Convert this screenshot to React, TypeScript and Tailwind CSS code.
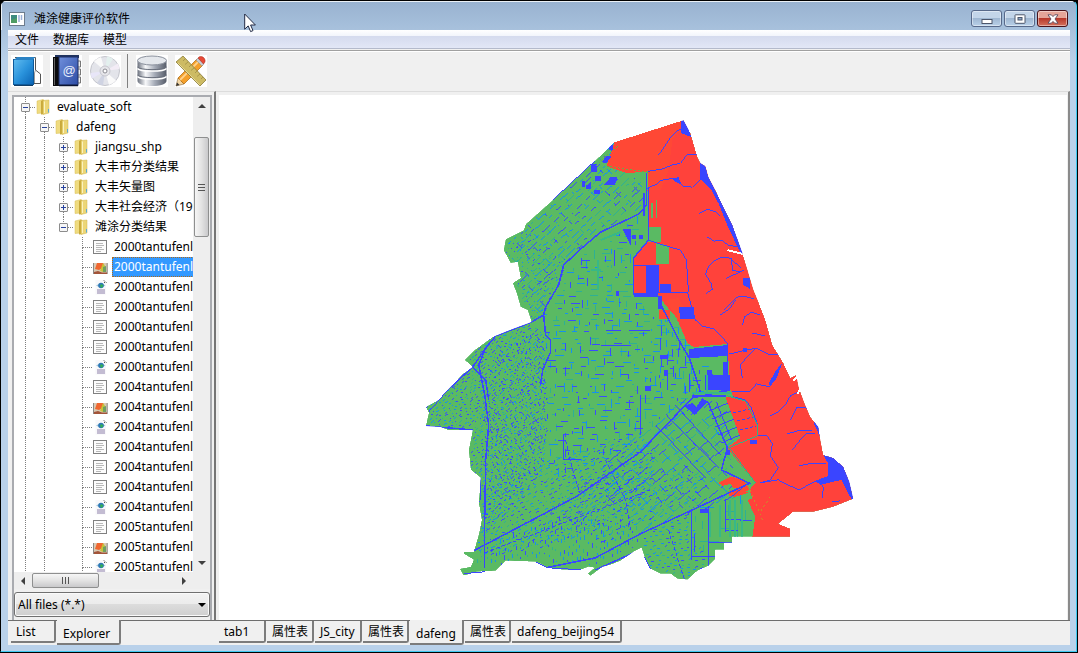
import React from "react";

type Pt = [number, number];

/* ---------- map data ---------- */

const OUTLINE =
  "683,120 690,133 697,157 700,163 705,166 708,177 716,192 723,207 732,225 742,253 753,290 758,302 765,320 772,345 783,363 790,378 796,375 798,386 800,392 804,403 810,417 818,427 820,440 823,455 833,458 843,467 849,482 853,499 833,507 813,512 793,512 778,524 790,529 790,537 732,537 732,543 724,543 724,550 715,550 715,559 708,566 697,571 687,580 677,579 670,574 660,574 650,569 644,557 641,548 633,552 620,561 610,565 602,567 590,576 587,574 594,568 588,567 580,570 562,570 547,568 540,564 535,562 505,561 495,571 476,572 463,576 459,569 470,567 473,560 463,554 463,552 473,552 478,535 481,520 478,503 480,478 470,470 468,450 472,430 447,430 440,427 425,426 428,413 425,407 438,400 447,390 462,374 472,367 464,360 474,350 492,337 512,329 531,322 527,310 520,307 516,293 512,283 520,278 517,262 510,263 503,250 505,239 523,230 525,224 552,200 580,174 594,161 614,142";

const RED =
  "614,142 683,120 690,133 697,157 705,166 716,192 732,225 742,253 758,302 765,320 772,345 783,363 790,378 796,375 800,392 810,417 818,427 823,455 833,458 843,467 849,482 853,499 833,507 813,512 793,512 778,524 790,529 790,537 752,537 755,517 747,500 752,499 749,490 755,483 727,448 740,438 725,397 733,397 730,390 727,344 693,347 687,343 678,322 667,308 658,295 633,295 632,260 640,248 648,240 655,241 661,227 648,227 647,190 648,171 627,173 606,166";

const pts = (s: string): Pt[] =>
  s.split(" ").map((p) => {
    const [x, y] = p.split(",").map(Number);
    return [x, y] as Pt;
  });

const inside = (x: number, y: number, poly: Pt[]) => {
  let hit = false;
  for (let i = 0, j = poly.length - 1; i < poly.length; j = i++) {
    const [xi, yi] = poly[i];
    const [xj, yj] = poly[j];
    if (yi > y !== yj > y && x < ((xj - xi) * (y - yi)) / (yj - yi) + xi) hit = !hit;
  }
  return hit;
};

type Zone = {
  poly: string;
  angle: number;
  step: number;
  dash: [number, number];
  gap: [number, number];
  mix: [number, number];
};

const ZONES: Zone[] = [
  { poly: "614,142 640,175 646,205 600,232 560,268 543,315 531,322 512,283 520,278 503,250 505,239 552,200", angle: -42, step: 6, dash: [2, 12], gap: [1, 7], mix: [0.35, 0.8] },
  { poly: "614,142 640,175 646,205 600,232 560,268 543,315 531,322 512,283 520,278 503,250 505,239 552,200", angle: 45, step: 11, dash: [1, 7], gap: [3, 14], mix: [0.35, 0.8] },
  { poly: "531,322 512,283 503,245 530,232 568,262 546,315", angle: -26, step: 4, dash: [1, 2], gap: [3, 7], mix: [0.3, 0.75] },
  { poly: "646,205 640,240 632,295 667,310 700,350 727,390 690,400 640,440 590,470 548,480 545,330 565,268", angle: 0, step: 6, dash: [2, 9], gap: [5, 18], mix: [0.35, 0.82] },
  { poly: "646,205 640,240 632,295 667,310 700,350 727,390 690,400 640,440 590,470 548,480 545,330 565,268", angle: 90, step: 8, dash: [2, 9], gap: [6, 22], mix: [0.45, 0.85] },
  { poly: "531,322 546,330 548,420 544,470 520,500 480,540 478,503 480,478 470,470 468,450 472,430 425,426 425,407 472,367 464,360 492,337", angle: -32, step: 3, dash: [1, 3], gap: [2, 5], mix: [0.5, 0.88] },
  { poly: "546,330 548,420 542,470 500,500 485,490 478,440 484,390 495,345", angle: 58, step: 4, dash: [1, 4], gap: [2, 9], mix: [0.7, 0.92] },
  { poly: "480,500 545,462 640,430 655,450 650,500 560,545 475,560", angle: -24, step: 4, dash: [1, 4], gap: [2, 6], mix: [0.4, 0.85] },
  { poly: "475,545 560,515 635,520 640,548 590,568 535,562 475,572", angle: 90, step: 4, dash: [1, 5], gap: [3, 10], mix: [0.4, 0.85] },
  { poly: "690,396 725,400 740,440 727,450 752,497 640,535 600,500 600,460", angle: -40, step: 9, dash: [5, 16], gap: [1, 5], mix: [0.5, 0.82] },
  { poly: "690,396 725,440 727,450 745,490 660,520 600,500 600,470 640,440", angle: 46, step: 11, dash: [3, 12], gap: [2, 8], mix: [0.45, 0.82] },
  { poly: "590,470 700,470 700,505 600,545 560,520", angle: -28, step: 5, dash: [1, 4], gap: [2, 6], mix: [0.35, 0.8] },
  { poly: "640,537 690,510 708,566 687,580 650,569", angle: -10, step: 4, dash: [2, 3], gap: [3, 6], mix: [0.3, 0.9] },
  { poly: "655,310 668,310 690,345 700,395 655,390", angle: 90, step: 6, dash: [3, 12], gap: [4, 12], mix: [0.5, 0.8] },
  { poly: "692,508 745,490 752,537 715,550 692,560", angle: 0, step: 11, dash: [5, 20], gap: [8, 22], mix: [0.3, 0.5] },
  { poly: "692,508 745,490 752,537 715,550 692,560", angle: 90, step: 9, dash: [5, 20], gap: [5, 22], mix: [0.15, 0.35] },
];

const buildTexture = () => {
  let seed = 20547;
  const rnd = () => {
    seed = (seed * 1664525 + 1013904223) % 4294967296;
    return seed / 4294967296;
  };
  const land = pts(OUTLINE);
  const red = pts(RED);
  const out = { blue: "", sky: "", teal: "" };
  for (const z of ZONES) {
    const poly = pts(z.poly);
    const a = (z.angle * Math.PI) / 180;
    const c = Math.cos(a);
    const s = Math.sin(a);
    const cx = 600;
    const cy = 380;
    for (let v = -300; v < 300; v += z.step) {
      let u = -300 + rnd() * 10;
      while (u < 300) {
        const len = z.dash[0] + rnd() * (z.dash[1] - z.dash[0]);
        const w = v + Math.round((rnd() - 0.5) * z.step * 0.5);
        const x = cx + u * c - w * s;
        const y = cy + u * s + w * c;
        const x2 = x + len * c;
        const y2 = y + len * s;
        if (inside(x, y, poly) && inside(x2, y2, poly) && inside(x, y, land) && !inside(x, y, red)) {
          const seg = `M${x.toFixed(1)} ${y.toFixed(1)}L${x2.toFixed(1)} ${y2.toFixed(1)}`;
          const r = rnd();
          if (r < z.mix[0]) out.blue += seg;
          else if (r < z.mix[1]) out.sky += seg;
          else out.teal += seg;
        }
        u += len + z.gap[0] + rnd() * (z.gap[1] - z.gap[0]);
      }
    }
  }
  return out;
};

const TEXTURE = buildTexture();

const MapView = () => (
  <svg viewBox="218 95 849 525" className="block h-full w-full" shapeRendering="crispEdges" role="img" aria-label="dafeng">
    <defs>
      <clipPath id="land">
        <polygon points={OUTLINE} />
      </clipPath>
    </defs>
    <g clipPath="url(#land)" fill="none">
      <polygon points={OUTLINE} fill="#5aba63" />
      <path d={TEXTURE.teal} stroke="#2fb094" />
      <path d={TEXTURE.sky} stroke="#1690ee" />
      <path d={TEXTURE.blue} stroke="#3b4bff" />
      <polygon points={RED} fill="#ff423b" />
      <polygon points="614,142 683,120 672,140 668,170 660,190 648,190 648,171 627,173 606,166" fill="#ff4835" />
      <polygon points="718,483 730,477 743,479 749,490 745,492 738,488 733,488 730,484 722,486" fill="#ff4835" />
      <polygon points="729,491 740,488 748,493 735,497 729,496" fill="#ff4835" />
      {/* polders within the tidal flat */}
      <path d="M655 242L669 246V264H656ZM661 227V242H648V227ZM651 203H653V218H651ZM656 200H657V218H656Z" fill="#5aba63" />
      <path d="M633 297H658L678 320H660V298Z" fill="#5aba63" />
      <path d="M659 310H670V319H659ZM665 300L678 298L690 320H677Z" fill="#ff4835" />
      {/* sea and ponds */}
      <g fill="#3a45ff">
        <path d="M681 120H685L691 137L681 133ZM700 160L705 166L708 177L723 207L732 225L744 256L739 251L726 223L718 203L711 190L700 179Z" />
        <path d="M647 265H658V293H647ZM660 284H671V293H660ZM633 293H658V297H633ZM658 296H662V309H658ZM678 307H694V319H680Z" />
        <path d="M622 229H630V245ZM631 235H635V239H631ZM638 235H642V239H638ZM642 193H645V216H642ZM615 291H618V296H615Z" />
        <path d="M689 349L727 345V356L689 358ZM705 375H723V362H727V375H730V390H705ZM707 370H712V376H707Z" />
        <path d="M684 406L692 403L696 407L702 398L707 402L694 415Z" />
        <path d="M823 455L833 458L843 467L849 480L855 499L851 499L841 480L820 485L815 481L828 476V464Z" />
        <path d="M816 422H819V434H821V440L813 422ZM743 278H750V289L743 285ZM782 363L776 379L770 386L768 384L776 370Z" />
        <path d="M590 164H596V172H590ZM604 156H611L606 163H602ZM608 145H612V150H608ZM603 185L610 177H617L614 185ZM594 176H600V181H594ZM585 186L590 182V189H585ZM593 190H599V194H593ZM581 181H584V187H581ZM672 178L678 177L681 184L674 181Z" />
        <path d="M700 509H708V513H700ZM660 355H668V359H660ZM664 370H668V376H664ZM645 386H651V391H645ZM743 348H747V352H743ZM750 440H757V444H750ZM726 450H730V455H726Z" />
      </g>
      {/* creeks on the flat */}
      <g stroke="#3a45ff">
        <path d="M658 155L665 145L670 137L676 131L683 128L688 134M648 171L661 169L671 165L680 163L687 154H697M647 188L656 184L661 180L673 178L683 186L692 187L701 178V172M699 213L707 209L716 212L720 216M707 237L714 241L721 240L728 245L738 247M705 274L708 267L713 261L721 257H728L734 262L741 268M712 290L711 284L705 274M726 278L735 274L744 270M731 258L732 270L740 272M706 293L712 289M724 310L730 304L737 297L744 296L754 299M648 240L660 244L680 250L686 260L688 292H658M633 265H646V293M658 265V293" />
        <path d="M687 292L695 320L702 326L714 329L722 337L727 344V390M742 325L744 317L751 312L760 315M720 315L730 308L735 300M752 333L765 336M729 354L742 351L756 348L768 354H778M756 348L745 359L740 365L742 378M732 392L750 391L756 384L770 387M770 416L778 412L785 405L790 396L798 392M790 420L796 408L806 408L812 413M787 434L797 431H812M792 450L801 439L806 434H815M799 466L808 464H826M733 397L745 400L751 408L757 424V435L767 436L772 444L770 456L778 468L770 480L760 483L778 480L785 484L799 490L812 483L818 480M819 480L823 488L822 498M832 502L840 501M748 483L731 497L724 501" />
      </g>
      <path d="M733 413L749 409M737 421L753 417M740 430L756 426" stroke="#3a45ff" strokeDasharray="3 2" />
      <path d="M729 448L755 483M727 396L745 401L757 425V436L728 448" stroke="#34b184" />
      <path d="M748 486L762 520M770 497L760 512" stroke="#c98b29" strokeDasharray="2 3" />
      {/* rivers and trunk canals */}
      <g stroke="#3a45ff" strokeWidth="1.5">
        <path d="M646 173V205L638 214L600 232L580 249L563 265L558 285L545 307L543 315L531 322M648 188V240L633 258V295" />
        <path d="M543 315L545 335L550 340V352L542 370L540 385M531 322L495 336L485 348L472 367L485 380L488 400M485 348L478 365L484 395L488 425L485 460L484 520V568M447 390L472 367M425 426L472 430M480 478V500" />
        <path d="M473 551L530 521L577 496L640 452L692 398L730 390M640 550L595 570M545 568L595 558L640 534L690 511L750 483" />
        <path d="M658 300L680 343L689 358L700 392M707 401L727 448L721 470L750 484M692 396H726" />
      </g>
      <g stroke="#3a45ff" strokeDasharray="4 2">
        <path d="M484 553L650 490M565 440L572 470L580 495M605 460L625 500L630 530M668 530L684 580" />
      </g>
      <g stroke="#3a45ff">
        <path d="M691 510V560M708 506V566M725 499V532M708 543H732M725 531H738M691 557H715M740 521H752M700 512L708 507M690 358L727 352M689 374V392M614 250V266M605 330H620M628 330H650M600 345H630M640 395V435M563 435V460H580" />
        <path d="M716 402L731 440M709 411L728 403M712 419L731 411M715 427L734 419M718 435L737 427M721 443L740 435M675 405L720 455M665 414L715 465M655 425L705 478" />
      </g>
      <path d="M692 393H732M707 375V392M710 512V537M720 505V537M730 500V537M735 500V537M742 500V537M600 240L620 232M590 270H600M597 260V290" stroke="#38b887" strokeWidth="2" />
      <path d="M595 166L607 154L618 146M606 166L648 172" stroke="#6fa847" strokeDasharray="2 2" />
      <path d="M727 250L743 254" stroke="#fff" strokeWidth="2" />
    </g>
    <path d="M793 381L797 376M797 394L801 388" stroke="#ffffff" strokeWidth="2" />
    <path d="M552 200L594 161M428 412L447 390M535 562L547 568L580 570M463 574L484 572M644 557L650 569" stroke="#3a45ff" fill="none" />
  </svg>
);

/* ---------- tool bar drawings ---------- */

const NotebookIcon = () => (
  <svg viewBox="0 0 32 32" className="size-8">
    <defs>
      <linearGradient id="nb" x1="0" y1="0" x2="1" y2="1">
        <stop offset="0" stopColor="#62bdf0" />
        <stop offset=".5" stopColor="#2a93dc" />
        <stop offset="1" stopColor="#0a63b4" />
      </linearGradient>
    </defs>
    <path d="M4 2.500H24.500V15L29.500 19V28.500H18" fill="#fff" stroke="#555" strokeWidth="1" />
    <path d="M24.500 15L23.500 18V28" fill="none" stroke="#999" />
    <rect x="2.500" y="4.500" width="20" height="25" fill="url(#nb)" stroke="#0d5a9c" />
    <path d="M3 5L6 2H24L22 5Z" fill="#2c83c4" />
    <path d="M3 30.500H22" stroke="#123f68" />
  </svg>
);

const AddressBookIcon = () => (
  <svg viewBox="0 0 32 32" className="size-8">
    <defs>
      <linearGradient id="ab" x1="0" y1="0" x2="1" y2="1">
        <stop offset="0" stopColor="#7090dc" />
        <stop offset="1" stopColor="#2c4ba4" />
      </linearGradient>
    </defs>
    <path d="M27 6H30.500V12H28M27 14H30.500V20H28M27 22H30.500V28H27" fill="#eee" stroke="#777" />
    <rect x="5" y="0" width="24" height="3" fill="#20335e" />
    <rect x="3" y="2" width="8" height="29" fill="#0b0b0d" />
    <path d="M4.500 3V30" stroke="#666" />
    <rect x="9" y="2" width="19" height="28" fill="url(#ab)" stroke="#1c2e66" />
    <path d="M9 30.500H28" stroke="#0b1430" strokeWidth="1.500" />
    <text x="19" y="20" textAnchor="middle" fontSize="13" fill="#e8effc" fontFamily="Liberation Sans, sans-serif">@</text>
  </svg>
);

const DiscIcon = () => (
  <svg viewBox="0 0 32 32" className="size-8">
    <circle cx="16" cy="16" r="14.500" fill="#e3e4ea" stroke="#c4c5cc" />
    <path d="M16 16L5 6.500A14.500 14.500 0 0 1 12 2Z" fill="#fafafa" />
    <path d="M16 16L27 25.500A14.500 14.500 0 0 1 20 30Z" fill="#fafafa" />
    <path d="M16 16L29 8.500A14.500 14.500 0 0 1 30.300 14Z" fill="#f3ecf6" />
    <path d="M16 16L3 23.500A14.500 14.500 0 0 1 1.700 18Z" fill="#e8e6f8" />
    <path d="M16 16L18 1.600A14.500 14.500 0 0 1 24 4Z" fill="#e3f0ee" />
    <path d="M16 16L8 28A14.500 14.500 0 0 0 14 30.300Z" fill="#cfd3e2" />
    <circle cx="16" cy="16" r="5" fill="#e6e6ea" stroke="#c6c6ce" />
    <circle cx="16" cy="16" r="2" fill="#fff" stroke="#8b8b93" />
  </svg>
);

const DatabaseIcon = () => (
  <svg viewBox="0 0 32 32" className="size-8">
    <defs>
      <linearGradient id="db" x1="0" x2="1">
        <stop offset="0" stopColor="#6b717e" />
        <stop offset=".28" stopColor="#f7f8fa" />
        <stop offset=".6" stopColor="#a4aab6" />
        <stop offset="1" stopColor="#565c69" />
      </linearGradient>
    </defs>
    <path d="M1.500 6V26C1.500 29 8 31 16 31S30.500 29 30.500 26V6Z" fill="url(#db)" />
    <path d="M1.500 12C4 15.500 28 15.500 30.500 12M1.500 20C4 23.500 28 23.500 30.500 20" fill="none" stroke="#6a707d" strokeWidth="1" />
    <path d="M1.500 13.500C4 17 28 17 30.500 13.500M1.500 21.500C4 25 28 25 30.500 21.500" fill="none" stroke="#fff" strokeWidth="1.300" />
    <ellipse cx="16" cy="5.500" rx="14.500" ry="4.500" fill="#e4e7ec" stroke="#8a909c" />
  </svg>
);

const RulerPencilIcon = () => (
  <svg viewBox="0 0 32 32" className="size-8">
    <path d="M1 31L3 23L9 29Z" fill="#f3d6a4" stroke="#8a6a3a" strokeWidth=".6" />
    <path d="M1 31L2 27.500L4.500 30Z" fill="#333" />
    <path d="M3 23L22 4L28 10L9 29Z" fill="#f4a02c" stroke="#a9660f" strokeWidth=".7" />
    <path d="M5 25L24 6" stroke="#ffd28a" strokeWidth="1.800" />
    <path d="M21 5L23 3L29 9L27 11Z" fill="#c9ccd2" stroke="#888" strokeWidth=".5" />
    <path d="M23 3C25 0 31 2 30 7L28.500 9Z" fill="#e84a37" stroke="#a32c1d" strokeWidth=".5" />
    <path d="M1 7L8 1L31 25L25 31Z" fill="#cdbb64" stroke="#8c7c38" strokeWidth=".8" />
    <path d="M10 4L8 6M13 7L10 9.500M16 10L14 12M19 13L16 15.500M22 16L20 18M25 19L22 21.500M28 22L26 24" stroke="#9a8a44" strokeWidth=".7" />
    <path d="M3 8L25 30" stroke="#e6d994" strokeWidth="1" />
  </svg>
);

/* ---------- tree ---------- */

type IconKind = "folder" | "text" | "image" | "globe";

const NodeIcon = ({ kind }: { kind: IconKind }) => {
  if (kind === "folder")
    return (
      <svg viewBox="0 0 16 16" className="size-4 shrink-0">
        <path d="M2 2L8 .5V14L2 14.500Z" fill="#efdb80" stroke="#d9bf55" strokeWidth=".5" />
        <path d="M6 2L9 .5L10 15L6 15.500Z" fill="#c9a93a" />
        <path d="M8 1.500L14 1V14L8 15.500Z" fill="#ecd677" stroke="#d2b64e" strokeWidth=".5" />
        <path d="M9.500 2.500V14" stroke="#fbf3bf" />
        <path d="M13.500 10V13.500" stroke="#59a9d8" />
      </svg>
    );
  if (kind === "text")
    return (
      <svg viewBox="0 0 16 16" className="size-4 shrink-0" shapeRendering="crispEdges">
        <rect x="1.500" y="1.500" width="13" height="13" rx="1" fill="#fcfcfc" stroke="#808080" />
        <path d="M4 4.500H11M4 6.500H12M4 8.500H10M4 10.500H12M4 12.500H9" stroke="#b9b9b9" />
      </svg>
    );
  if (kind === "image")
    return (
      <svg viewBox="0 0 16 16" className="size-4 shrink-0">
        <rect x="1" y="4" width="14.500" height="11" fill="#d7c9b4" />
        <path d="M1.500 4V15M15.200 4V15" stroke="#777" strokeWidth=".8" />
        <path d="M3 10L5 4H11L12 8L7 11Z" fill="#f0662f" />
        <path d="M8 12L11 4L13 7L11 13Z" fill="#c6c23a" />
        <path d="M11 8L14 7V13H11Z" fill="#6fa060" />
        <path d="M2 13L6 12L10 13.500H15V15H2Z" fill="#a3553a" />
      </svg>
    );
  return (
    <svg viewBox="0 0 16 16" className="size-4 shrink-0">
      <path d="M3.500 1H11L14 4V15.500H3.500Z" fill="#f8f8fa" />
      <path d="M11.500 1L14.500 4M12 3.500H14.500" stroke="#555" strokeDasharray="1 1" fill="none" />
      <rect x="5" y="10" width="8" height="5" fill="#c3bcd2" />
      <path d="M4 6.500Q9 3 13.500 6.500Q9 9.500 4 6.500" fill="#9cc4dc" />
      <circle cx="9" cy="6.500" r="2.800" fill="#2c78b4" />
      <path d="M9 5L11.500 6.500L9.500 9L8 7Z" fill="#35b052" />
    </svg>
  );
};

type Node = { label: string; level: number; kind: IconKind; open?: boolean; selected?: boolean; guides: boolean[] };

const folder = (label: string, level: number, open: boolean, guides: boolean[]): Node => ({ label, level, kind: "folder", open, guides });
const file = (year: number, kind: IconKind, selected = false): Node => ({
  label: `${year}tantufenlei`,
  level: 3,
  kind,
  selected,
  guides: [true, true, false],
});

const NODES: Node[] = [
  folder("evaluate_soft", 0, true, []),
  folder("dafeng", 1, true, [true]),
  folder("jiangsu_shp", 2, false, [true, true]),
  folder("大丰市分类结果", 2, false, [true, true]),
  folder("大丰矢量图", 2, false, [true, true]),
  folder("大丰社会经济（1995", 2, false, [true, true]),
  folder("滩涂分类结果", 2, true, [true, true]),
  file(2000, "text"),
  file(2000, "image", true),
  file(2000, "globe"),
  file(2000, "text"),
  file(2000, "text"),
  file(2000, "text"),
  file(2000, "globe"),
  file(2004, "text"),
  file(2004, "image"),
  file(2004, "globe"),
  file(2004, "text"),
  file(2004, "text"),
  file(2004, "text"),
  file(2004, "globe"),
  file(2005, "text"),
  file(2005, "image"),
  file(2005, "globe"),
];

const TreeRow = ({ node, last }: { node: Node; last: boolean }) => (
  <li role="treeitem" aria-selected={!!node.selected} className="flex h-5 items-center whitespace-nowrap">
    {node.guides.map((on, i) => (
      <span key={i} className="flex h-5 w-[19px] shrink-0 pl-[9px]">
        {on && <span className="h-5 border-l border-dotted border-[#808080]" />}
      </span>
    ))}
    <span className="relative flex h-5 w-[19px] shrink-0 flex-col pl-[9px]">
      <span className="h-[11px] border-b border-l border-dotted border-[#808080]" />
      <span className={last ? "h-[9px]" : "h-[9px] border-l border-dotted border-[#808080]"} />
      {node.kind === "folder" && (
        <button
          type="button"
          aria-label={node.open ? "折叠" : "展开"}
          className="absolute top-1.5 left-[5px] flex size-[9px] items-center justify-center rounded-[1px] border border-[#8c8c8c] bg-[#f6f6f6]"
        >
          <svg viewBox="0 0 5 5" className="size-[5px]" shapeRendering="crispEdges">
            <path d={node.open ? "M0 2.500H5" : "M0 2.500H5M2.500 0V5"} stroke="#27429c" />
          </svg>
        </button>
      )}
    </span>
    <NodeIcon kind={node.kind} />
    <span
      className={
        node.selected
          ? "ml-1 flex h-5 items-center border border-dotted border-[#b06a1c] bg-[#3399ff] pr-1 pl-px text-white"
          : "ml-1.5"
      }
    >
      {node.label}
    </span>
  </li>
);

const Arrow = ({ d }: { d: string }) => (
  <svg viewBox="0 0 8 8" className="size-2">
    <path d={d} fill="#404040" />
  </svg>
);

const Tab = ({ label, active = false, width }: { label: string; active?: boolean; width: string }) => (
  <button
    type="button"
    role="tab"
    aria-selected={active}
    className={`${width} mr-px flex shrink-0 justify-start whitespace-nowrap rounded-br-[3px] border-r-2 border-b-2 border-[#7c7c7c] bg-[#f0f0f0] ${
      active ? "-mt-px h-[25px] items-center pt-1 pl-1.5" : "h-[22px] items-center pt-0.5 pl-[5px]"
    }`}
  >
    {label}
  </button>
);

const WinButton = ({ label, tone, children }: { label: string; tone: string; children: React.ReactNode }) => (
  <button
    type="button"
    aria-label={label}
    className={`flex h-[17px] w-[31px] items-center justify-center rounded-[3px] border shadow-[inset_0_0_0_1px_#ffffff70] ${tone}`}
  >
    {children}
  </button>
);

const PLAIN = "border-[#57698a] bg-[linear-gradient(#c3d5e9_0_50%,#9fb7d2_50%,#b9d0e8)]";
const CLOSE = "border-[#4a1219] bg-[linear-gradient(#e5a598_0_50%,#b8392a_50%,#d4705c)]";

export default function App() {
  return (
    <div className="h-screen bg-black pr-px pb-px font-['Noto_Sans','Noto_Sans_CJK_SC',sans-serif] text-xs leading-4 text-black">
      <div className="relative flex h-full flex-col overflow-hidden rounded-t-md border-t border-r border-b border-l border-t-black border-r-[#3fc8f0] border-b-[#3fc8f0] border-l-black bg-[linear-gradient(#98b2d0,#b9d1ea_60px)]">
        <header className="flex h-[29px] shrink-0 items-center border-t border-l border-white/80 pt-1.5 pl-[7px]">
          <svg viewBox="0 0 16 14" className="h-[14px] w-4 shrink-0">
            <rect x=".5" y=".5" width="15" height="13" fill="#fff" stroke="#6d7c8d" />
            <rect x="2" y="3" width="6" height="8" fill="#3e8b7f" />
            <path d="M2 8L8 6V11H2Z" fill="#4f9c63" />
            <path d="M10 3V10M12.500 3V8" stroke="#9bb0d8" strokeWidth="1.500" />
          </svg>
          <h1 className="ml-[9px] text-xs">滩涂健康评价软件</h1>
          <div className="mr-2 ml-auto flex gap-0.5 pb-px">
            <WinButton label="最小化" tone={PLAIN}>
              <svg viewBox="0 0 12 10" className="h-[10px] w-3">
                <rect x="1" y="5.500" width="10" height="4" fill="#fff" stroke="#4c566b" />
              </svg>
            </WinButton>
            <WinButton label="最大化" tone={PLAIN}>
              <svg viewBox="0 0 12 10" className="h-[10px] w-3">
                <rect x="1" y=".8" width="10" height="8.500" rx=".5" fill="#fff" stroke="#4c566b" />
                <rect x="4" y="3.500" width="4" height="2.500" fill="#8ba6c8" stroke="#4c566b" />
              </svg>
            </WinButton>
            <WinButton label="关闭" tone={CLOSE}>
              <svg viewBox="0 0 12 10" className="h-[10px] w-3">
                <path d="M1 .8H4.300L6 2.600L7.700 .8H11L8 5L11 9.200H7.700L6 7.400L4.300 9.200H1L4 5Z" fill="#fff" stroke="#5b4b5e" strokeWidth=".9" />
              </svg>
            </WinButton>
          </div>
        </header>

        <div className="mr-1.5 mb-1.5 ml-[7px] flex min-h-0 flex-1 flex-col bg-[#f0f0f0]">
          <nav className="flex h-[19px] shrink-0 items-center gap-[14px] border-b border-[#b4bacb] bg-[linear-gradient(#fff_0,#f1f4fb_35%,#d5dbee_36%,#e2e7f6)] pt-0.5 pl-[7px]">
            <button type="button">文件</button>
            <button type="button">数据库</button>
            <button type="button">模型</button>
          </nav>
          <div className="mt-px flex h-[41px] shrink-0 items-center border-t border-[#a0a0a0] pl-[3px] shadow-[inset_0_1px_0_#fff]">
            <button type="button" aria-label="新建" className="bg-white">
              <NotebookIcon />
            </button>
            <button type="button" aria-label="通讯录" className="ml-[7px] bg-white">
              <AddressBookIcon />
            </button>
            <button type="button" aria-label="光盘" className="ml-[7px] bg-white">
              <DiscIcon />
            </button>
            <span className="ml-1.5 h-[34px] w-px bg-[#808080]" />
            <button type="button" aria-label="数据库" className="ml-2 bg-white">
              <DatabaseIcon />
            </button>
            <button type="button" aria-label="工具" className="ml-[7px] bg-white">
              <RulerPencilIcon />
            </button>
          </div>

          <main className="flex min-h-0 flex-1">
            <aside className="flex w-[208px] shrink-0 flex-col">
              <div className="flex min-h-0 flex-1 flex-col border-t border-r-2 border-t-[#dcdcdc] border-r-[#757575] pt-[3px] pr-0.5 pl-1">
                <div className="flex min-h-0 flex-1 flex-col border-2 border-b-0 border-[#a9abb0]">
                  <div className="flex min-h-0 flex-1">
                    <ul role="tree" className="min-w-0 flex-1 overflow-hidden bg-white pl-0.5">
                      {NODES.map((n, i) => (
                        <TreeRow key={i} node={n} last={n.label === "滩涂分类结果"} />
                      ))}
                    </ul>
                    <div className="flex w-[17px] shrink-0 flex-col items-center bg-[#eeeeee]">
                      <button type="button" aria-label="向上" className="flex h-[18px] items-center">
                        <Arrow d="M0 6L4 2L8 6Z" />
                      </button>
                      <div className="mt-[22px] flex h-[100px] w-[15px] flex-col items-center justify-center gap-0.5 rounded-[2px] border border-[#8e8f8f] bg-[linear-gradient(90deg,#f6f6f6,#e3e3e3_50%,#c9c9cb)]">
                        <span className="h-px w-[7px] bg-[#555]" />
                        <span className="h-px w-[7px] bg-[#555]" />
                        <span className="h-px w-[7px] bg-[#555]" />
                      </div>
                      <button type="button" aria-label="向下" className="mt-auto flex h-[18px] items-center">
                        <Arrow d="M0 2L4 6L8 2Z" />
                      </button>
                    </div>
                  </div>
                  <div className="flex h-[17px] shrink-0 items-center bg-[#eeeeee] pr-[17px]">
                    <button type="button" aria-label="向左" className="flex w-[18px] justify-center">
                      <Arrow d="M6 0L2 4L6 8Z" />
                    </button>
                    <div className="flex h-[15px] w-[67px] items-center justify-center gap-0.5 rounded-[2px] border border-[#8e8f8f] bg-[linear-gradient(#f6f6f6,#e3e3e3_50%,#c9c9cb)]">
                      <span className="h-[7px] w-px bg-[#555]" />
                      <span className="h-[7px] w-px bg-[#555]" />
                      <span className="h-[7px] w-px bg-[#555]" />
                    </div>
                    <button type="button" aria-label="向右" className="ml-auto flex w-[18px] justify-center">
                      <Arrow d="M2 0L6 4L2 8Z" />
                    </button>
                  </div>
                  <div className="grid shrink-0 items-center bg-[#f0f0f0] pt-[3px] pb-[3px]">
                    <select
                      aria-label="文件类型"
                      className="col-start-1 row-start-1 h-[25px] w-full appearance-none rounded-[3px] border border-[#707070] bg-[linear-gradient(#f3f3f3,#ebebeb_50%,#dcdcdc_50%,#cfcfcf)] pl-[3px] shadow-[inset_0_0_0_1px_#fafafa]"
                    >
                      <option>All files (*.*)</option>
                    </select>
                    <svg viewBox="0 0 8 4" className="pointer-events-none col-start-1 row-start-1 mr-1 h-1 w-2 justify-self-end">
                      <path d="M0 0H8L4 4Z" fill="#000" />
                    </svg>
                  </div>
                </div>
              </div>
              <div role="tablist" className="flex h-[25px] shrink-0 border-t border-[#6e6e6e] pl-[3px]">
                <Tab label="List" width="w-[45px]" />
                <Tab label="Explorer" width="w-[64px]" active />
              </div>
            </aside>

            <section className="flex min-w-0 flex-1 flex-col">
              <div className="min-h-0 flex-1 border-t border-r-2 border-t-[#dcdcdc] border-r-[#8a8a8a] pt-[3px] pr-px pl-[3px]">
                <div className="h-full bg-white">
                  <MapView />
                </div>
              </div>
              <div role="tablist" className="flex h-[25px] shrink-0 border-t border-[#6e6e6e] pl-[3px]">
                <Tab label="tab1" width="w-[47px]" />
                <Tab label="属性表" width="w-[47px]" />
                <Tab label="JS_city" width="w-[47px]" />
                <Tab label="属性表" width="w-[46px]" />
                <Tab label="dafeng" width="w-[54px]" active />
                <Tab label="属性表" width="w-[46px]" />
                <Tab label="dafeng_beijing54" width="w-[110px]" />
              </div>
            </section>
          </main>
        </div>

        {/* mouse pointer */}
        <svg viewBox="0 0 12 20" className="pointer-events-none absolute top-3 left-[243px] h-5 w-3">
          <path d="M.7 1V16.200L4.200 12.900L6.600 18.600L9 17.600L6.600 12H11.400Z" fill="#fff" stroke="#222b45" strokeWidth="1" />
        </svg>
      </div>
    </div>
  );
}
